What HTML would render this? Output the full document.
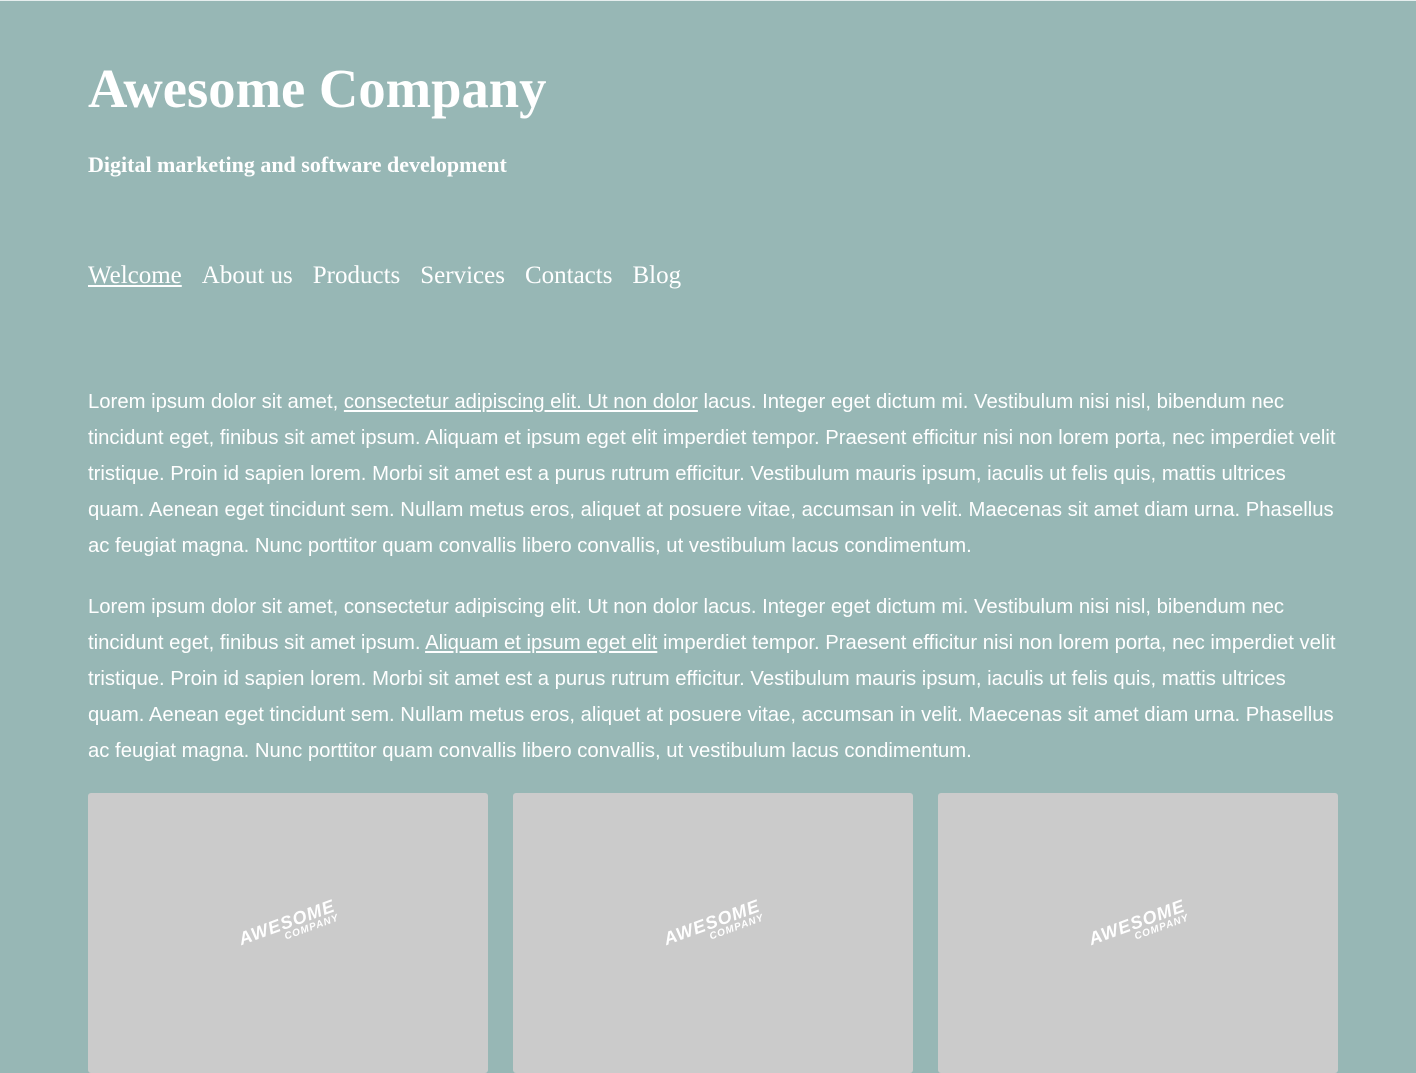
<!DOCTYPE html>
<html><head><meta charset="utf-8"><style>
html,body{margin:0;padding:0}
body{width:1416px;height:1062px;overflow:hidden;background:#97b7b5;color:#fff;position:relative;border-top:1px solid #e6eeee;box-sizing:border-box}
.a{position:absolute;left:88px;margin:0;white-space:nowrap}
h1{font:bold 54.6px/1 "Liberation Serif",serif;top:61px}
h2{font:bold 22px/1 "Liberation Serif",serif;top:153px}
nav{top:262px;font:25px/1 "Liberation Serif",serif}
nav span{margin-right:20px}
nav span:first-child{text-decoration:underline}
.p{position:absolute;left:88px;width:1256px;font:20.3px/36px "Liberation Sans",sans-serif;margin:0}
.p u{text-decoration:underline}
.c{position:absolute;top:792px;width:400px;height:280px;background:#cbcbcb;border-radius:3px}
.c span{position:absolute;left:150px;top:120px;transform:rotate(-20deg);font:bold 18px/1 "Liberation Sans",sans-serif;color:#fff;font-style:italic;text-align:right;letter-spacing:1px}
.c span i{display:block;font-size:10px;font-weight:bold;margin-top:0px}
</style></head><body>
<h1 class="a">Awesome Company</h1>
<h2 class="a">Digital marketing and software development</h2>
<nav class="a"><span>Welcome</span><span>About us</span><span>Products</span><span>Services</span><span>Contacts</span><span>Blog</span></nav>
<p class="p" style="top:383px">Lorem ipsum dolor sit amet, <u>consectetur adipiscing elit. Ut non dolor</u> lacus. Integer eget dictum mi. Vestibulum nisi nisl, bibendum nec tincidunt eget, finibus sit amet ipsum. Aliquam et ipsum eget elit imperdiet tempor. Praesent efficitur nisi non lorem porta, nec imperdiet velit tristique. Proin id sapien lorem. Morbi sit amet est a purus rutrum efficitur. Vestibulum mauris ipsum, iaculis ut felis quis, mattis ultrices quam. Aenean eget tincidunt sem. Nullam metus eros, aliquet at posuere vitae, accumsan in velit. Maecenas sit amet diam urna. Phasellus ac feugiat magna. Nunc porttitor quam convallis libero convallis, ut vestibulum lacus condimentum.</p>
<p class="p" style="top:588px">Lorem ipsum dolor sit amet, consectetur adipiscing elit. Ut non dolor lacus. Integer eget dictum mi. Vestibulum nisi nisl, bibendum nec tincidunt eget, finibus sit amet ipsum. <u>Aliquam et ipsum eget elit</u> imperdiet tempor. Praesent efficitur nisi non lorem porta, nec imperdiet velit tristique. Proin id sapien lorem. Morbi sit amet est a purus rutrum efficitur. Vestibulum mauris ipsum, iaculis ut felis quis, mattis ultrices quam. Aenean eget tincidunt sem. Nullam metus eros, aliquet at posuere vitae, accumsan in velit. Maecenas sit amet diam urna. Phasellus ac feugiat magna. Nunc porttitor quam convallis libero convallis, ut vestibulum lacus condimentum.</p>
<div class="c" style="left:88px"><span>AWESOME<i>COMPANY</i></span></div>
<div class="c" style="left:513px"><span>AWESOME<i>COMPANY</i></span></div>
<div class="c" style="left:938px"><span>AWESOME<i>COMPANY</i></span></div>
</body></html>
